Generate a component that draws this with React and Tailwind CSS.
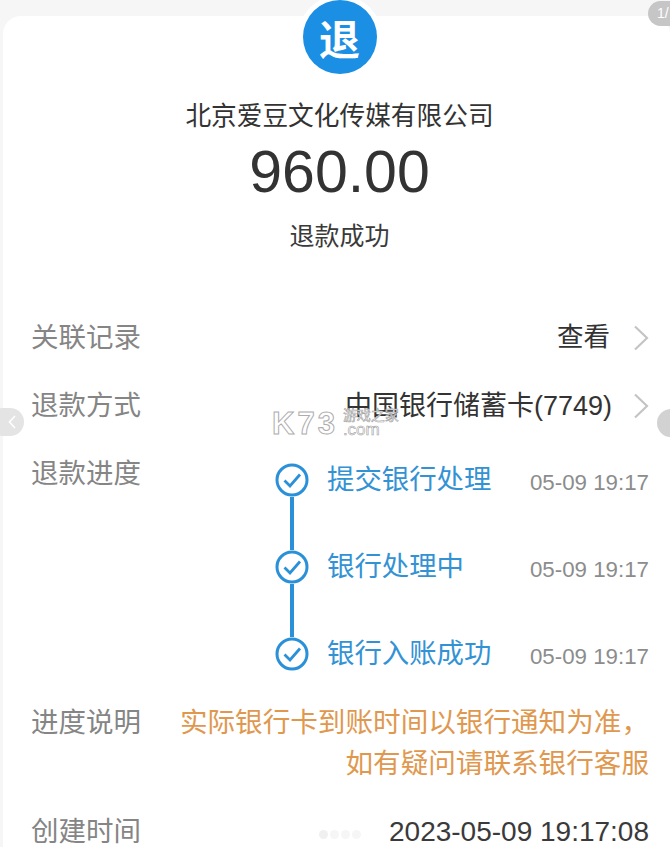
import React from 'react';

const font = { sans: 'font-["Liberation_Sans","Noto_Sans_CJK_SC",sans-serif]' };

const Chevron = () => (
  <svg width="16" height="26" viewBox="0 0 16 26" fill="none" className="shrink-0">
    <path d="M2 1.5 L14 13 L2 24.5" stroke="#c4c4c4" strokeWidth="2.2" />
  </svg>
);

const CheckCircle = () => (
  <svg width="34" height="34" viewBox="0 0 34 34" fill="none" className="shrink-0">
    <circle cx="17" cy="17" r="15" stroke="#2a90d8" strokeWidth="3" />
    <path d="M9.5 17.5 L15 23 L25 11.5" stroke="#2a90d8" strokeWidth="2.8" />
  </svg>
);

const steps = [
  { name: '提交银行处理', last: false },
  { name: '银行处理中', last: false },
  { name: '银行入账成功', last: true },
];

const Step = ({ name, last }) => (
  <div className="flex">
    <div className="flex flex-col items-center w-[34px]">
      <CheckCircle />
      {!last && <div className="w-[4px] h-[53px] bg-[#2a90d8]"></div>}
    </div>
    <div className="flex flex-1 justify-between h-[34px] ml-[18px]">
      <span className="text-[27.4px] leading-[34px] text-[#3392d4]">{name}</span>
      <span className="text-[22.3px] leading-[34px] mt-[3px] text-[#8c8c8c]">05-09 19:17</span>
    </div>
  </div>
);

const App = () => {
  return (
    <div className={`relative w-[670px] h-[847px] overflow-hidden bg-[#f6f6f6] pt-4 pl-[3px] ${font.sans}`}>
      <div className="flex flex-col h-[900px] bg-white rounded-t-[18px] pl-[28px] pr-[21px]">
        <div className="flex flex-col items-center pr-[1px]">
          <div className="-mt-4 w-[74px] h-[74px] rounded-full bg-[#1b8fe3] ring-[5px] ring-white flex items-center justify-center text-[41px] leading-none font-bold text-white font-['Noto_Sans_CJK_SC',sans-serif]">
            退
          </div>
          <div className="mt-[24px] text-[25.7px] leading-[36px] text-[#333333]">北京爱豆文化传媒有限公司</div>
          <div className="mt-[3px] text-[59px] leading-[70px] text-[#333333]">960.00</div>
          <div className="mt-[11px] text-[25px] leading-[36px] text-[#3a3a3a]">退款成功</div>
        </div>

        <div className="flex items-center justify-between h-[40px] mt-[64px]">
          <span className="text-[27.5px] text-[#858585]">关联记录</span>
          <div className="flex items-center gap-[23px]">
            <span className="text-[26.5px] text-[#333333]">查看</span>
            <Chevron />
          </div>
        </div>

        <div className="flex items-center justify-between h-[40px] mt-[28px]">
          <span className="text-[27.5px] text-[#858585]">退款方式</span>
          <div className="flex items-center gap-[21px]">
            <span className="text-[27px] text-[#333333]">中国银行储蓄卡(7749)</span>
            <Chevron />
          </div>
        </div>

        <div className="flex mt-[28px]">
          <span className="w-[244px] shrink-0 text-[27.5px] leading-[40px] text-[#858585]">退款进度</span>
          <div className="flex flex-col flex-1 pt-[9px]">
            {steps.map((s) => (
              <Step key={s.name} name={s.name} last={s.last} />
            ))}
          </div>
        </div>

        <div className="flex justify-between mt-[31px]">
          <span className="text-[27.5px] leading-[41px] text-[#858585]">进度说明</span>
          <div className="text-right text-[27.6px] leading-[41px] text-[#e0984f]">
            <div>实际银行卡到账时间以银行通知为准，</div>
            <div>如有疑问请联系银行客服</div>
          </div>
        </div>

        <div className="flex items-center justify-between h-[40px] mt-[28px]">
          <span className="text-[27.5px] text-[#858585]">创建时间</span>
          <span className="text-[28px] text-[#3a3a3a]">2023-05-09 19:17:08</span>
        </div>
      </div>

      {/* gallery overlay */}
      <div className="absolute top-[1px] left-[648px] w-[44px] h-[25px] rounded-full bg-[#c6c6c6] pl-[9px] text-[14px] leading-[25px] text-white">1/</div>
      <div className="absolute top-[408px] left-[-12px] w-[36px] h-[28px] rounded-full bg-[#e4e4e4] flex items-center justify-end pr-[8px]">
        <svg width="8" height="14" viewBox="0 0 8 14" fill="none">
          <path d="M7 1 L1.5 7 L7 13" stroke="#ffffff" strokeWidth="1.6" />
        </svg>
      </div>
      <div className="absolute top-[409px] left-[657px] w-[30px] h-[28px] rounded-full bg-[#d2d2d2]"></div>

      <div className="absolute top-[408px] left-[272px] flex items-start gap-[5px] text-white">
        <span className="mt-[1px] text-[31px] leading-[30px] font-bold tracking-[3px] [-webkit-text-stroke:1px_#adadad]">K73</span>
        <div className="flex flex-col items-start [-webkit-text-stroke:0.6px_#a0a0a0]">
          <span className="text-[14px] leading-[15px]">游戏之家</span>
          <span className="text-[17px] leading-[13px]">.com</span>
        </div>
      </div>

      <div className="absolute top-[830px] left-[319px] flex gap-[2px]">
        <div className="w-[9px] h-[9px] rounded-full bg-[#f0f0f0]"></div>
        <div className="w-[9px] h-[9px] rounded-full bg-[#f6f6f6]"></div>
        <div className="w-[9px] h-[9px] rounded-full bg-[#f6f6f6]"></div>
        <div className="w-[9px] h-[9px] rounded-full bg-[#f6f6f6]"></div>
      </div>
    </div>
  );
};

export default App;
